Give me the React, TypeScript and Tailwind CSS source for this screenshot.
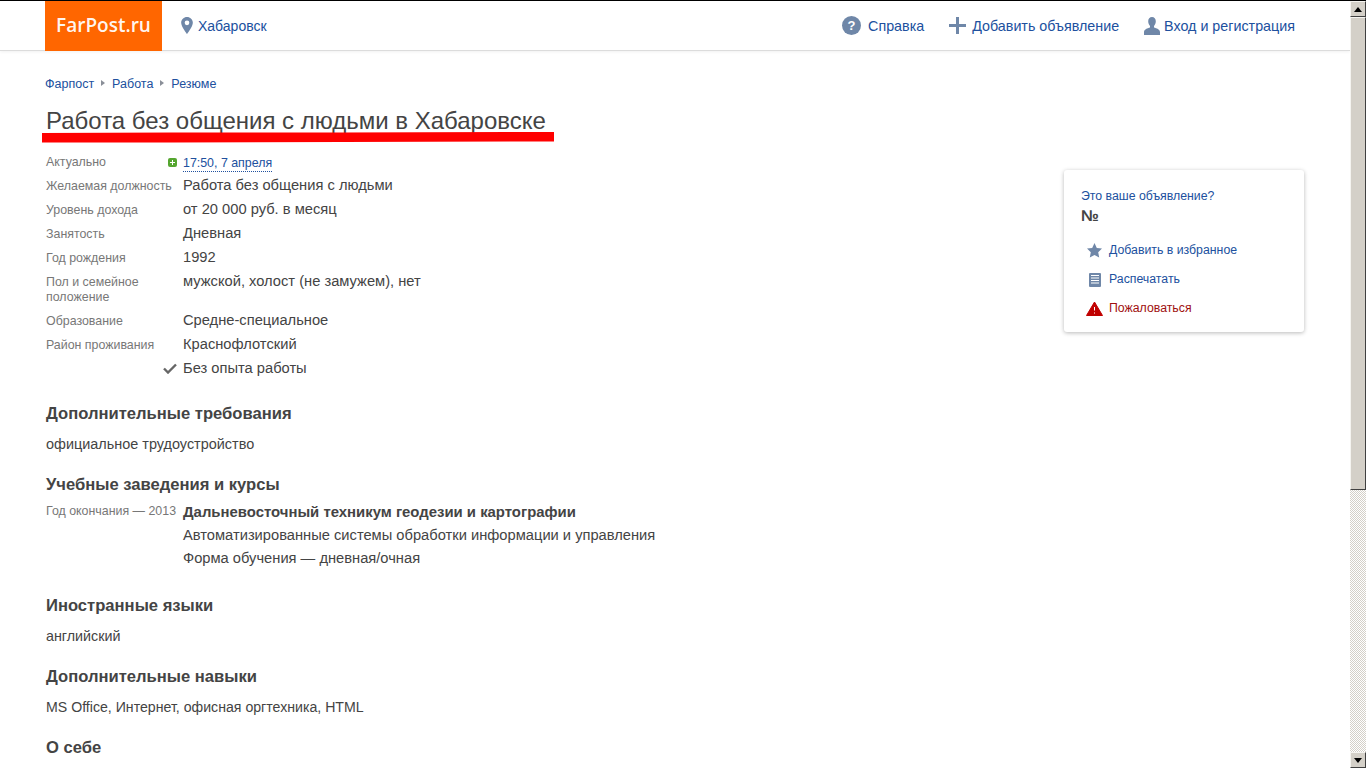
import React from "react";

const Blue = "text-[#20509e]";

function Row({ label, children, cls = "h-6" }: { label: React.ReactNode; children: React.ReactNode; cls?: string }) {
  return (
    <div className={`flex ${cls}`}>
      <div className="w-[137px] shrink-0 pt-[6px] text-[12.4px] leading-[15px] text-[#777]">{label}</div>
      <div className="text-[14.7px] leading-[24px] text-[#444]">{children}</div>
    </div>
  );
}

function Section({ title, body, cls, bodyCls = "text-[14.3px]" }: { title: string; body?: string; cls: string; bodyCls?: string }) {
  return (
    <div className={cls}>
      <h2 className="text-[16.6px] leading-[20px] font-bold text-[#444]">{title}</h2>
      {body && <p className={`mt-[10px] ${bodyCls} leading-[20px] text-[#444]`}>{body}</p>}
    </div>
  );
}

function Scrollbar() {
  const btn = "h-4 w-4 shrink-0 flex items-center justify-center bg-[#d4d0c8] border border-t-[#f5f4f0] border-l-[#f5f4f0] border-r-[#404040] border-b-[#404040]";
  return (
    <div className="w-4 shrink-0 h-full flex flex-col bg-[repeating-conic-gradient(#d4d0c8_0_25%,#ffffff_0_50%)] bg-[length:2px_2px]">
      <div className={btn}>
        <svg width="8" height="5" viewBox="0 0 8 5"><path d="M4 0 8 5H0z" fill="#000" /></svg>
      </div>
      <div className="h-[473px] w-4 shrink-0 bg-[#d4d0c8] border border-t-[#f5f4f0] border-l-[#f5f4f0] border-r-[#404040] border-b-[#404040]" />
      <div className="flex-1" />
      <div className={btn}>
        <svg width="8" height="5" viewBox="0 0 8 5"><path d="M0 0H8L4 5z" fill="#000" /></svg>
      </div>
    </div>
  );
}

function Breadcrumb() {
  const Tri = () => (
    <svg width="4" height="6" viewBox="0 0 4 6" className="mx-[7px] mb-[3px]"><path d="M0 0 4 3 0 6z" fill="#8a8f98" /></svg>
  );
  return (
    <div className={`flex items-center text-[12.5px] leading-[16px] ${Blue}`}>
      <span>Фарпост</span><Tri /><span>Работа</span><Tri /><span>Резюме</span>
    </div>
  );
}

export default function App() {
  return (
    <div className="flex h-screen w-full flex-col overflow-hidden bg-white font-['Liberation_Sans',Arial,sans-serif]">
      <div className="h-px shrink-0 bg-black" />
      <div className="flex min-h-0 flex-1">
        <div className="relative min-w-0 flex-1 overflow-hidden">
          <header className="flex h-[50px] items-center border-b border-[#dcdcdc] pl-[45px] pr-[55px] shadow-[0_1px_3px_rgba(0,0,0,0.06)]">
            <div className="flex h-[50px] w-[117px] items-center justify-center bg-[#ff6600] text-[19px] font-['Open_Sans',sans-serif] font-semibold text-white/95">
              FarPost.ru
            </div>
            <div className={`ml-[19px] mt-[2px] flex items-center text-[14px] ${Blue}`}>
              <svg width="12" height="17" viewBox="0 0 11 16" className="mr-[5px] mb-[2px]">
                <path fillRule="evenodd" d="M5.500 0C2.500 0 0 2.400 0 5.400 0 9 5.500 16 5.500 16S11 9 11 5.400C11 2.400 8.500 0 5.500 0zm0 3.300a2.200 2.200 0 1 1 0 4.400 2.200 2.200 0 0 1 0-4.400z" fill="#6f87a8" />
              </svg>
              Хабаровск
            </div>
            <div className={`ml-auto mt-[2px] flex items-center text-[14.3px] ${Blue}`}>
              <svg width="19" height="19" viewBox="0 0 19 19" className="mr-[7px] mb-[2px]">
                <circle cx="9.500" cy="9.500" r="9.500" fill="#6f87a8" />
                <text x="9.500" y="14" textAnchor="middle" fontSize="13" fontWeight="700" fill="#fff" fontFamily="Liberation Sans">?</text>
              </svg>
              <span>Справка</span>
              <svg width="17" height="17" viewBox="0 0 17 17" className="ml-[25px] mr-[6px] mb-[2px]">
                <path d="M7 0h3v7h7v3h-7v7H7v-7H0V7h7z" fill="#6f87a8" />
              </svg>
              <span>Добавить объявление</span>
              <svg width="16" height="18" viewBox="0 0 16 18" className="ml-[25px] mr-[4px] mb-[2px]">
                <path d="M8 0c2.300 0 3.800 1.800 3.800 4.300 0 2-.9 3.600-1.800 4.600v1.500c2.500.8 6 1.800 6 4.600V18H0v-3c0-2.800 3.500-3.800 6-4.600V8.900C5.100 7.900 4.200 6.300 4.200 4.300 4.200 1.800 5.700 0 8 0z" fill="#6f87a8" />
              </svg>
              <span>Вход и регистрация</span>
            </div>
          </header>

          <main className="relative pl-[46px]">
            <div className="-ml-px pt-[25px]"><Breadcrumb /></div>
            <h1 className="mt-[14px] text-[24px] leading-[30px] text-[#444]">Работа без общения с людьми в Хабаровске</h1>
            <svg width="512" height="11" viewBox="0 0 512 11" className="absolute left-[42px] top-[81px]">
              <path d="M0 1 130 .5 300 .5 512 0V9.500L300 10 130 10.500 0 10.500z" fill="#ff0000" />
            </svg>

            <div className="mt-[17px]">
              <div className="flex h-[20px]">
                <div className="w-[122px] shrink-0 pt-[2px] text-[12.4px] leading-[15px] text-[#777]">Актуально</div>
                <div className="flex items-start">
                  <span className="mt-[5px] mr-[6px] flex h-[9px] w-[9px] items-center justify-center rounded-[2px] bg-[#55a630]">
                    <svg width="5" height="5" viewBox="0 0 5 5"><path d="M2 0h1v2h2v1H3v2H2V3H0V2h2z" fill="#fff" /></svg>
                  </span>
                  <span className={`mt-[3px] border-b border-dotted border-[#20509e] text-[12.4px] leading-[15px] ${Blue}`}>17:50, 7 апреля</span>
                </div>
              </div>
              <div>
                <Row label="Желаемая должность">Работа без общения с людьми</Row>
                <Row label="Уровень дохода">от 20 000 руб. в месяц</Row>
                <Row label="Занятость">Дневная</Row>
                <Row label="Год рождения">1992</Row>
                <Row label={<>Пол и семейное<br />положение</>} cls="h-[39px]">мужской, холост (не замужем), нет</Row>
                <Row label="Образование">Средне-специальное</Row>
                <Row label="Район проживания">Краснофлотский</Row>
                <div className="flex h-6 items-center pl-[117px]">
                  <svg width="14" height="11" viewBox="0 0 14 11" className="mr-[6px]">
                    <path d="M1 5.500 5 9.500 13 1.500" fill="none" stroke="#666" strokeWidth="2.400" />
                  </svg>
                  <span className="text-[14.7px] text-[#444]">Без опыта работы</span>
                </div>
              </div>
            </div>

            <Section cls="mt-[24px]" title="Дополнительные требования" body="официальное трудоустройство" bodyCls="text-[14.45px]" />
            <Section cls="mt-[21px]" title="Учебные заведения и курсы" />
            <div className="mt-[5px] flex">
              <div className="w-[137px] shrink-0 pt-[4px] text-[12.4px] leading-[15px] text-[#777]">Год окончания — 2013</div>
              <div className="pt-px text-[14.7px] leading-[23px] text-[#444]">
                <div className="text-[14.9px] font-bold">Дальневосточный техникум геодезии и картографии</div>
                <div>Автоматизированные системы обработки информации и управления</div>
                <div>Форма обучения — дневная/очная</div>
              </div>
            </div>
            <Section cls="mt-[26px]" title="Иностранные языки" body="английский" />
            <Section cls="mt-[21px]" title="Дополнительные навыки" body="MS Office, Интернет, офисная оргтехника, HTML" bodyCls="text-[14.15px]" />
            <Section cls="mt-[21px]" title="О себе" />

            <aside className="absolute left-[1064px] top-[119px] h-[162px] w-[240px] rounded-[3px] bg-white px-[17px] pt-[19px] shadow-[0_1px_4px_rgba(0,0,0,0.28)]">
              <div className={`text-[12.3px] leading-[15px] ${Blue}`}>Это ваше объявление?</div>
              <div className="mt-[2px] text-[16px] leading-[20px] font-bold text-[#444]">№</div>
              <ul className="mt-[10px] text-[12.3px]">
                <li className={`flex h-[29px] items-center ${Blue}`}>
                  <span className="flex w-[28px] justify-center pr-[1px]">
                    <svg width="15" height="15" viewBox="0 0 15 15"><path d="M7.500 0 9.800 5 15 5.600 11.200 9.200 12.200 14.500 7.500 11.900 2.800 14.500 3.800 9.200 0 5.600 5.200 5z" fill="#6f87a8" /></svg>
                  </span>
                  Добавить в избранное
                </li>
                <li className={`flex h-[29px] items-center ${Blue}`}>
                  <span className="flex w-[28px] justify-center pr-[1px]">
                    <svg width="12" height="14" viewBox="0 0 12 14"><path fillRule="evenodd" d="M1 0h10a1 1 0 0 1 1 1v12a1 1 0 0 1-1 1H1a1 1 0 0 1-1-1V1a1 1 0 0 1 1-1zM2 2v1h8V2zM2 4.500v1h8v-1zM2 7v1h8V7zM2 9.500v1h8v-1z" fill="#6f87a8" /></svg>
                  </span>
                  Распечатать
                </li>
                <li className="flex h-[29px] items-center text-[#a01010]">
                  <span className="flex w-[28px] justify-center pr-[1px]">
                    <svg width="17" height="15" viewBox="0 0 17 15"><path fillRule="evenodd" stroke="#c00000" strokeWidth="1" strokeLinejoin="round" d="M8.500 1 16.500 14.500H.5zM7.500 5.500v4.500h2V5.500zM7.500 11v2h2v-2z" fill="#c00000" /></svg>
                  </span>
                  Пожаловаться
                </li>
              </ul>
            </aside>
          </main>
        </div>
        <Scrollbar />
      </div>
    </div>
  );
}
